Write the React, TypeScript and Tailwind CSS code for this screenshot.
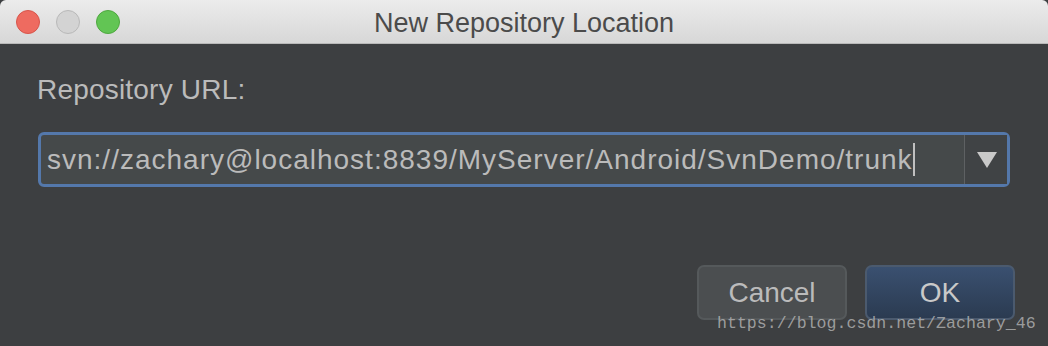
export default function App(): React.ReactNode {
  const sans = { fontFamily: '"Liberation Sans", Arial, sans-serif' };

  return (
    <div className="relative h-[346px] w-[1048px] overflow-hidden bg-[#3d3f41]" style={sans}>
      <div className="grid h-[44px] grid-cols-[1fr_auto_1fr] items-center rounded-t-[6px] border-b border-[#b9b9b9] bg-gradient-to-b from-[#ececec] to-[#d7d7d7]">
        <div className="flex gap-[16px] pl-[16px]">
          <span className="h-[24px] w-[24px] rounded-full border border-[#d8554b] bg-[#ee6b60]" />
          <span className="h-[24px] w-[24px] rounded-full border border-[#b9b9b9] bg-[#d3d3d3]" />
          <span className="h-[24px] w-[24px] rounded-full border border-[#4ea83f] bg-[#62c554]" />
        </div>
        <div className="pt-[3px] text-[27px] leading-none text-[#4b4b4b]">New Repository Location</div>
        <div />
      </div>

      <div className="px-[37px] pt-[32px]">
        <div className="text-[28px] leading-none tracking-[0.2px] text-[#bbbbbb]">Repository URL:</div>

        <div className="mt-[28px] ml-[1px] flex h-[55px] w-[972px] rounded-[6px] border-[3px] border-[#5478ab] bg-[#45494a]">
          <div className="flex flex-1 items-center pl-[6px] text-[28px] leading-none text-[#bbbbbb]">
            <span className="tracking-[1px]">svn://zachary@localhost:8839/MyServer/Android/SvnDemo/trunk</span>
            <span className="h-[33px] w-[2px] bg-[#c0c0c0]" />
          </div>
          <div className="flex w-[43px] items-center justify-center border-l border-[#5e6163] bg-[#404345] pl-[2px]">
            <svg width="20" height="16" viewBox="0 0 20 16">
              <path d="M0 0 L20 0 L10 16 Z" fill="#c9c9c9" />
            </svg>
          </div>
        </div>

        <div className="mt-[78px] flex justify-end gap-[18px]">
          <button className="h-[55px] w-[150px] rounded-[7px] border-[2px] border-[#55595b] bg-[#4b4e50] text-[28px] leading-none text-[#bbbbbb]">
            Cancel
          </button>
          <button className="mr-[-4px] h-[55px] w-[150px] rounded-[7px] border-[2px] border-[#4b5a6e] bg-gradient-to-b from-[#3a5070] to-[#2b3b51] text-[28px] leading-none text-[#c9c9c9]">
            OK
          </button>
        </div>
      </div>

      <div
        className="absolute left-[717px] top-[316px] text-[16.6px] leading-none text-[#b5b5b5]/80"
        style={{ fontFamily: '"Liberation Mono", "Courier New", monospace' }}
      >
        https://blog.csdn.net/Zachary_46
      </div>
    </div>
  );
}
